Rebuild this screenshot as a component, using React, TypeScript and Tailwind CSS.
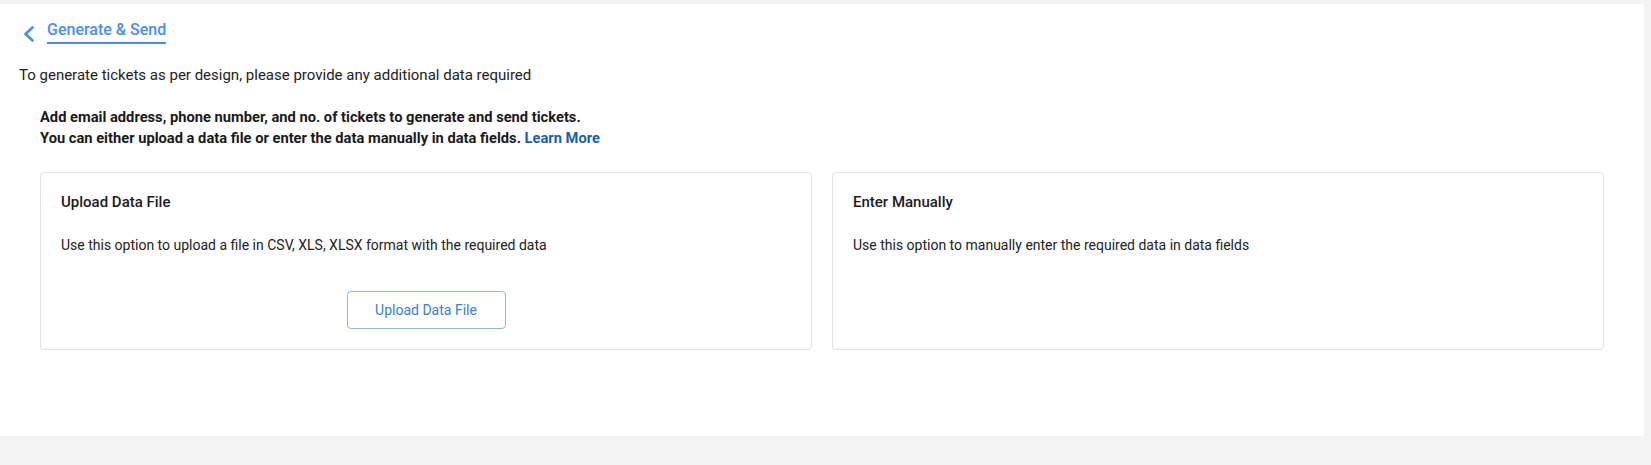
import React from 'react';

function BackChevron() {
  return (
    <svg width="12" height="16" viewBox="0 0 12 16" fill="none" xmlns="http://www.w3.org/2000/svg">
      <polyline points="9.5,1.5 2.5,8 9.5,14.5" stroke="#4a8fe7" strokeWidth="2.6" strokeLinecap="round" strokeLinejoin="round" />
    </svg>
  );
}

function OptionCard({ title, description, children }: { title: string; description: string; children?: React.ReactNode }) {
  return (
    <div className="flex flex-col rounded border border-[#e2e2e2] bg-white px-5 pt-[19px] pb-5">
      <h3 className="text-[15px] leading-5 font-medium text-[#1c1c1c]">{title}</h3>
      <p className="mt-[23px] text-sm leading-5 text-[#222]">{description}</p>
      {children}
    </div>
  );
}

export default function App() {
  return (
    <div className="min-h-[465px] bg-[#f3f3f3] pt-1 pr-[7px]" style={{ fontFamily: 'Roboto, "Liberation Sans", sans-serif' }}>
      <div className="h-[432px] bg-white">
        {/* Header */}
        <div className="flex items-start pl-[23px] pt-[10px]">
          <div className="mt-3">
            <BackChevron />
          </div>
          <div className="ml-3 border-b-2 border-[#4a8fe7] pt-1">
            <span className="block text-base leading-6 font-medium text-[#4a8fe7]">Generate &amp; Send</span>
          </div>
        </div>

        <p className="mt-[21px] pl-[19px] text-[15px] leading-5 text-[#222]">
          To generate tickets as per design, please provide any additional data required
        </p>

        <div className="px-10">
          <div className="mt-[22px] text-[14.7px] leading-[21px] font-bold text-[#1a1a1a]">
            <p>Add email address, phone number, and no. of tickets to generate and send tickets.</p>
            <p>
              You can either upload a data file or enter the data manually in data fields.{' '}
              <a className="text-[#1b5fab] cursor-pointer">Learn More</a>
            </p>
          </div>

          <div className="mt-[23px] grid grid-cols-2 gap-5">
            <OptionCard
              title="Upload Data File"
              description="Use this option to upload a file in CSV, XLS, XLSX format with the required data"
            >
              <div className="mt-9 flex justify-center">
                <button className="h-[38px] w-[159px] rounded border border-[#8db6e4] bg-white text-sm text-[#3b7fd0]">
                  Upload Data File
                </button>
              </div>
            </OptionCard>
            <OptionCard
              title="Enter Manually"
              description="Use this option to manually enter the required data in data fields"
            />
          </div>
        </div>
      </div>
    </div>
  );
}
